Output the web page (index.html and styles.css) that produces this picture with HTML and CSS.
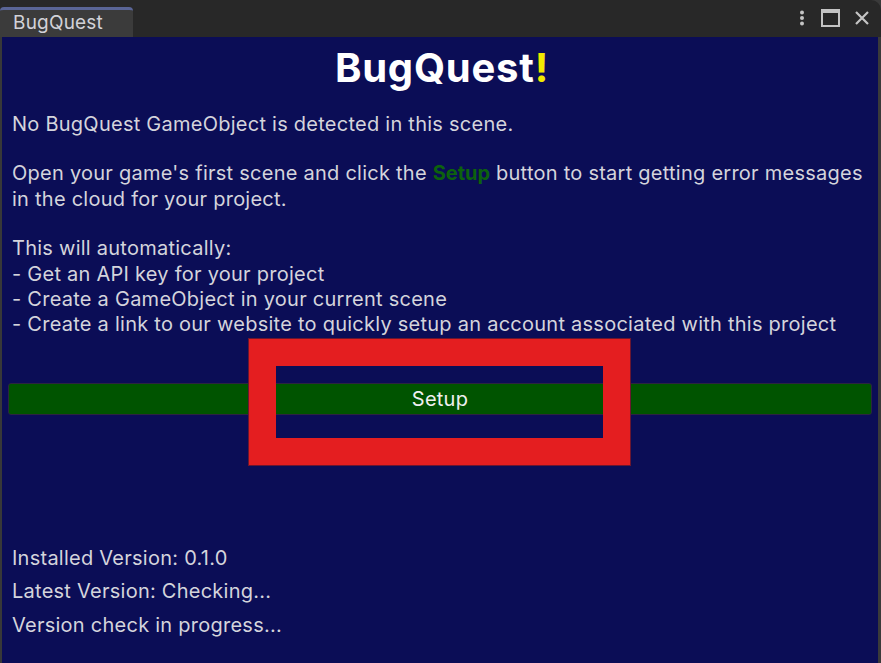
FILE: index.html
```html
<!DOCTYPE html>
<html lang="en">
<head>
  <meta charset="UTF-8">
  <title>BugQuest</title>
  <link rel="stylesheet" href="styles.css">
</head>
<body>
  <div class="window">
    <!-- Tab bar -->
    <div class="tabbar">
      <div class="tab">BugQuest</div>
      <div class="tab-tools">
        <svg class="tool" width="10" height="16" viewBox="0 0 10 16">
          <circle cx="5" cy="2.5" r="2" fill="#c4c4c4"/>
          <circle cx="5" cy="8" r="2" fill="#c4c4c4"/>
          <circle cx="5" cy="13.5" r="2" fill="#c4c4c4"/>
        </svg>
        <svg class="tool" width="19" height="18" viewBox="0 0 19 18">
          <rect x="1" y="1" width="17" height="16" fill="none" stroke="#c4c4c4" stroke-width="2"/>
          <rect x="1" y="1" width="17" height="3" fill="#c4c4c4"/>
        </svg>
        <svg class="tool" width="16" height="16" viewBox="0 0 16 16">
          <path d="M2 2 L14 14 M14 2 L2 14" stroke="#c4c4c4" stroke-width="2.2" fill="none"/>
        </svg>
      </div>
    </div>

    <!-- Panel -->
    <div class="panel">
      <div class="title">BugQuest<span class="bang">!</span></div>

      <div class="message">
        <p>No BugQuest GameObject is detected in this scene.</p>
        <p>Open your game's first scene and click the <span class="hl">Setup</span> button to start getting error messages in the cloud for your project.</p>
        <p>This will automatically:<br>
          - Get an API key for your project<br>
          - Create a GameObject in your current scene<br>
          - Create a link to our website to quickly setup an account associated with this project</p>
      </div>

      <div class="setup-wrap">
        <button class="setup-btn">Setup</button>
        <div class="highlight-box"></div>
      </div>

      <div class="versions">
        <div class="version-line">Installed Version: 0.1.0</div>
        <div class="version-line">Latest Version: Checking...</div>
        <div class="version-line">Version check in progress...</div>
      </div>
    </div>
  </div>
</body>
</html>
```

FILE: styles.css
```css
/* ===============================
   BASE
=============================== */
html, body {
  margin: 0;
  padding: 0;
  width: 100%;
  height: 100%;
  background: #3a3a3a;
}
body {
  font-family: 'Inter', 'Noto Sans', sans-serif;
  color: #d4d4dc;
  overflow: hidden;
}

.window {
  display: flex;
  flex-direction: column;
  height: 100%;
  background: #282828;
  border-top-right-radius: 10px;
  box-sizing: border-box;
  padding-top: 3px;
}

/* ===============================
   TAB BAR
=============================== */
.tabbar {
  display: flex;
  justify-content: space-between;
  align-items: flex-end;
  height: 34px;
}
.tab {
  width: 133px;
  height: 30px;
  box-sizing: border-box;
  background: #3b3b3b;
  border-top: 3px solid #5a6596;
  border-radius: 4px 4px 0 0;
  padding-left: 13px;
  font-size: 19px;
  line-height: 26px;
  color: #d2d2d8;
  letter-spacing: 0.2px;
}
.tab-tools {
  display: flex;
  align-items: center;
  gap: 14px;
  height: 34px;
  padding-right: 11px;
  padding-bottom: 5px;
  box-sizing: border-box;
}
.tool {
  display: block;
}

/* ===============================
   PANEL
=============================== */
.panel {
  flex: 1;
  background: #0b0d56;
  border-left: 2px solid #383838;
  border-right: 3px solid #3a3a3a;
  padding: 6px 6px 0 10px;
  display: flex;
  flex-direction: column;
  position: relative;
}

.title {
  text-align: center;
  font-size: 40px;
  font-weight: 700;
  color: #ffffff;
  line-height: 50px;
  margin-bottom: 19px;
  letter-spacing: 0.8px;
}
.bang {
  color: #f2ea00;
}

.message {
  font-size: 20px;
  line-height: 25.4px;
  letter-spacing: 0.25px;
}
.message p {
  margin: 0 0 24px 0;
}
.message p:last-child {
  margin-bottom: 0;
}
.hl {
  color: #0d620d;
  font-weight: 700;
  letter-spacing: 0;
}

/* ===============================
   SETUP BUTTON
=============================== */
.setup-wrap {
  position: relative;
  margin: 45px 0 0 -4px;
}
.setup-btn {
  display: block;
  width: 100%;
  height: 32px;
  background: #005400;
  border: 1px solid #2b2540;
  border-radius: 3px;
  color: #f0f0f0;
  font-family: 'Inter', 'Noto Sans', sans-serif;
  font-size: 20px;
  letter-spacing: 0.25px;
  padding: 0;
}
.highlight-box {
  position: absolute;
  left: 241px;
  top: -44px;
  width: 327px;
  height: 72px;
  border: 27px solid #e41e20;
  box-shadow: 0 0 0 1px #6a1630;
}

/* ===============================
   VERSIONS
=============================== */
.versions {
  margin-top: 127px;
  font-size: 20px;
  letter-spacing: 0.25px;
}
.version-line {
  line-height: 33.5px;
}
```
